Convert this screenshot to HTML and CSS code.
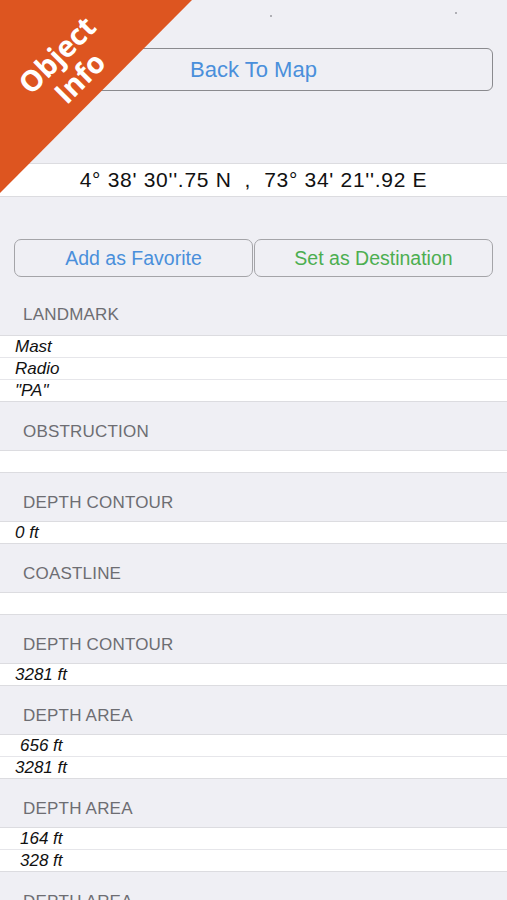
FILE: index.html
```html
<!DOCTYPE html>
<html>
<head>
<meta charset="utf-8">
<link rel="stylesheet" href="styles.css">
</head>
<body>
<div class="page">
  <div class="ribbon"><div class="ribbon-text">Object<br>Info</div></div>
  <div class="status"><span class="dot dot-a"></span><span class="dot dot-b"></span></div>
  <div class="top">
    <button class="btn btn-back">Back To Map</button>
  </div>
  <div class="coords">4° 38' 30''.75 N  ,  73° 34' 21''.92 E</div>
  <div class="actions">
    <button class="btn btn-fav">Add as Favorite</button>
    <button class="btn btn-dest">Set as Destination</button>
  </div>

  <div class="header first">LANDMARK</div>
  <div class="group">
    <div class="row">Mast</div>
    <div class="row">Radio</div>
    <div class="row">"PA"</div>
  </div>

  <div class="header">OBSTRUCTION</div>
  <div class="group"><div class="row"></div></div>

  <div class="header">DEPTH CONTOUR</div>
  <div class="group"><div class="row">0 ft</div></div>

  <div class="header">COASTLINE</div>
  <div class="group"><div class="row"></div></div>

  <div class="header">DEPTH CONTOUR</div>
  <div class="group"><div class="row">3281 ft</div></div>

  <div class="header">DEPTH AREA</div>
  <div class="group">
    <div class="row indent">656 ft</div>
    <div class="row">3281 ft</div>
  </div>

  <div class="header">DEPTH AREA</div>
  <div class="group">
    <div class="row indent">164 ft</div>
    <div class="row indent">328 ft</div>
  </div>

  <div class="header">DEPTH AREA</div>
  <div class="group">
    <div class="row"></div>
  </div>
</div>
</body>
</html>
```
FILE: styles.css
```css
html, body {
  margin: 0;
  padding: 0;
  background: #efeff4;
}
body {
  font-family: "Liberation Sans", Arial, sans-serif;
  width: 507px;
  height: 900px;
  overflow: hidden;
}
.page {
  position: relative;
}
.ribbon {
  position: absolute;
  left: 0;
  top: 0;
  width: 192px;
  height: 193px;
  background: #dd5520;
  clip-path: polygon(0 0, 100% 0, 0 100%);
  z-index: 5;
}
.ribbon-text {
  position: absolute;
  left: -7px;
  top: 34px;
  width: 150px;
  text-align: center;
  transform: rotate(-45deg);
  color: #fff;
  font-family: "Open Sans", "Liberation Sans", sans-serif;
  font-weight: 700;
  font-size: 29px;
  line-height: 32px;
}
.status {
  height: 0;
  position: relative;
}
.dot {
  position: absolute;
  width: 2px;
  height: 2px;
  background: #9a9aa0;
  border-radius: 1px;
}
.dot-a { left: 270px; top: 15px; }
.dot-b { left: 455px; top: 12px; }
.top {
  padding: 48px 14px 0 14px;
  height: 163px;
  box-sizing: border-box;
}
.btn {
  display: block;
  font-family: "Liberation Sans", Arial, sans-serif;
  background: transparent;
  margin: 0;
  padding: 0;
  cursor: pointer;
}
.btn-back {
  width: 479px;
  height: 43px;
  border: 1.5px solid #8a8a8e;
  border-radius: 6px;
  color: #4a8fdb;
  font-size: 22px;
}
.coords {
  background: #fff;
  border-top: 1px solid #dcdce0;
  border-bottom: 1px solid #dcdce0;
  height: 34px;
  line-height: 32px;
  text-align: center;
  white-space: pre;
  font-size: 21px;
  letter-spacing: 0.7px;
  color: #111;
  box-sizing: border-box;
}
.actions {
  display: grid;
  grid-template-columns: 239px 239px;
  column-gap: 1px;
  padding: 42px 14px 0 14px;
}
.btn-fav, .btn-dest {
  height: 38px;
  border: 1px solid #a4a4a8;
  border-radius: 7px;
  font-size: 19.5px;
}
.btn-fav { color: #4a8fdb; }
.btn-dest { color: #4cae50; }
.header {
  height: 48px;
  display: flex;
  align-items: flex-end;
  padding: 0 0 8px 23px;
  box-sizing: border-box;
  font-size: 17px;
  letter-spacing: 0.2px;
  line-height: 20px;
  color: #6d6d72;
}
.header.first {
  height: 58px;
  padding-bottom: 10px;
}
.group {
  background: #fff;
  border-top: 1px solid #dcdce0;
  border-bottom: 1px solid #dcdce0;
}
.row {
  height: 21px;
  line-height: 21px;
  padding-left: 15px;
  font-style: italic;
  font-size: 17px;
  color: #111;
  border-bottom: 1px solid #e6e6ea;
}
.row:last-child {
  border-bottom: none;
}
.row.indent {
  padding-left: 20px;
}
```
